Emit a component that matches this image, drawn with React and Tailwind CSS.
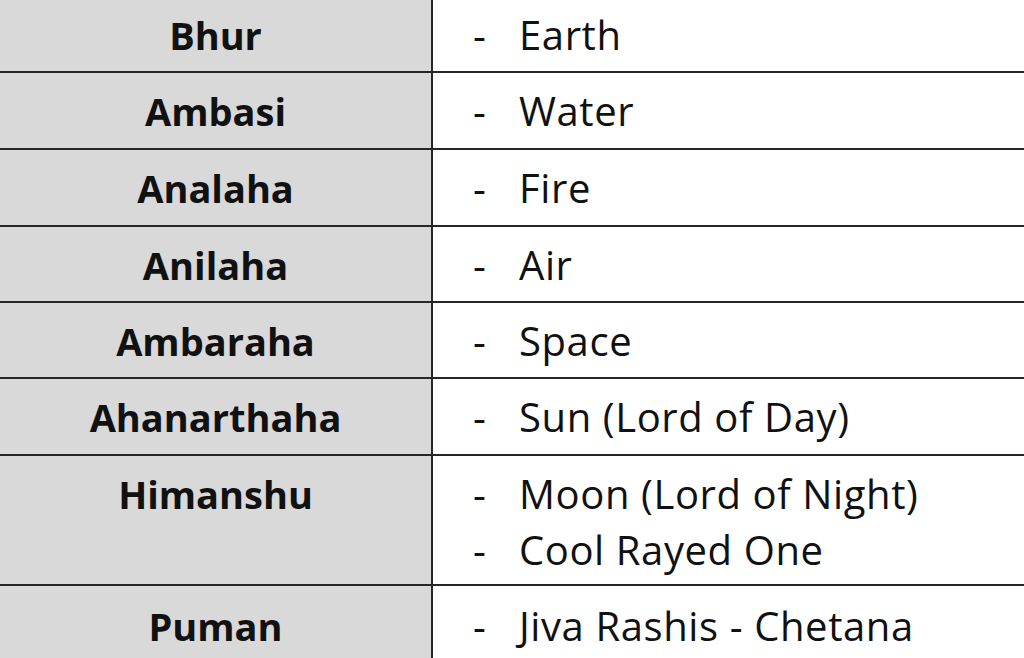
const rows = [
  { name: 'Bhur', items: ['Earth'], h: 'h-[73px]', pt: 'pt-[7px]' },
  { name: 'Ambasi', items: ['Water'], h: 'h-[77px]', pt: 'pt-[10px]' },
  { name: 'Analaha', items: ['Fire'], h: 'h-[77px]', pt: 'pt-[10px]' },
  { name: 'Anilaha', items: ['Air'], h: 'h-[76px]', pt: 'pt-[10px]' },
  { name: 'Ambaraha', items: ['Space'], h: 'h-[76px]', pt: 'pt-[10px]' },
  { name: 'Ahanarthaha', items: ['Sun (Lord of Day)'], h: 'h-[77px]', pt: 'pt-[10px]' },
  { name: 'Himanshu', items: ['Moon (Lord of Night)', 'Cool Rayed One'], h: 'h-[130px]', pt: 'pt-[10px]' },
  { name: 'Puman', items: ['Jiva Rashis - Chetana'], h: 'h-[80px]', pt: 'pt-[12px]' },
]

export default function App() {
  return (
    <div className="w-[1024px] h-[658px] overflow-hidden bg-white text-[#111] font-['Open_Sans','Liberation_Sans',sans-serif]">
      {rows.map((r, i) => (
        <div
          key={r.name}
          className={`flex ${r.h} ${i < rows.length - 1 ? 'border-b-2 border-[#262626]' : ''}`}
        >
          <div className={`w-[433px] shrink-0 bg-[#d9d9d9] border-r-2 border-[#262626] text-center font-bold text-[38px] leading-[56px] ${r.pt}`}>
            {r.name}
          </div>
          <div className={`flex-1 text-[40px] ${r.pt}`}>
            {r.items.map((t) => (
              <div key={t} className="flex leading-[56px]">
                <span className="w-[86px] pl-[40px]">-</span>
                <span className="tracking-[0.6px]">{t}</span>
              </div>
            ))}
          </div>
        </div>
      ))}
    </div>
  )
}
